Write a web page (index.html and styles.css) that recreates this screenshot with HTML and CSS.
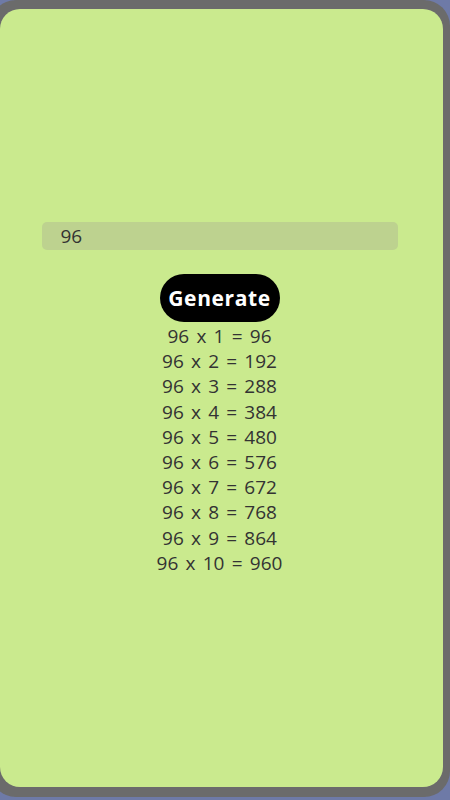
FILE: index.html
```html
<!DOCTYPE html>
<html>
<head>
<meta charset="utf-8">
<link rel="stylesheet" href="styles.css">
</head>
<body>
<div class="frame">
  <div class="card">
    <div class="content">
      <input class="num" type="text" value="96">
      <button class="gen">Generate</button>
      <div class="table">
        <div>96 x 1 = 96</div>
        <div>96 x 2 = 192</div>
        <div>96 x 3 = 288</div>
        <div>96 x 4 = 384</div>
        <div>96 x 5 = 480</div>
        <div>96 x 6 = 576</div>
        <div>96 x 7 = 672</div>
        <div>96 x 8 = 768</div>
        <div>96 x 9 = 864</div>
        <div>96 x 10 = 960</div>
      </div>
    </div>
  </div>
</div>
</body>
</html>
```

FILE: styles.css
```css
html, body {
  margin: 0;
  padding: 0;
  background: #6e7aa7;
  height: 800px;
  overflow: hidden;
}
.frame {
  box-sizing: border-box;
  margin-left: -10px;
  width: 460px;
  height: 797px;
  background: #6b6b6b;
  border-radius: 26px;
  padding: 9px 7px 10px 10px;
}
.card {
  height: 100%;
  background: #caea8e;
  border-radius: 20px;
  display: flex;
  align-items: center;
  justify-content: center;
  font-family: "Open Sans", "Noto Sans", sans-serif;
  color: #333;
}
.content {
  display: flex;
  flex-direction: column;
  align-items: center;
  margin-right: 4px;
  margin-top: 2px;
}
.num {
  box-sizing: border-box;
  width: 356px;
  height: 28px;
  border: none;
  outline: none;
  border-radius: 5px;
  background: #bdd28f;
  padding: 0 0 0 19px;
  font-family: "Open Sans", "Noto Sans", sans-serif;
  font-size: 19px;
  color: #333;
}
.gen {
  margin-top: 24px;
  width: 120px;
  height: 48px;
  border: none;
  border-radius: 24px;
  background: #000;
  color: #fff;
  font-family: "Open Sans", "Noto Sans", sans-serif;
  font-weight: 700;
  font-size: 21px;
  letter-spacing: 0.6px;
  padding: 0;
}
.table {
  text-align: center;
  font-size: 19px;
  line-height: 25.2px;
  word-spacing: 2.3px;
  margin-top: 2px;
}
```
